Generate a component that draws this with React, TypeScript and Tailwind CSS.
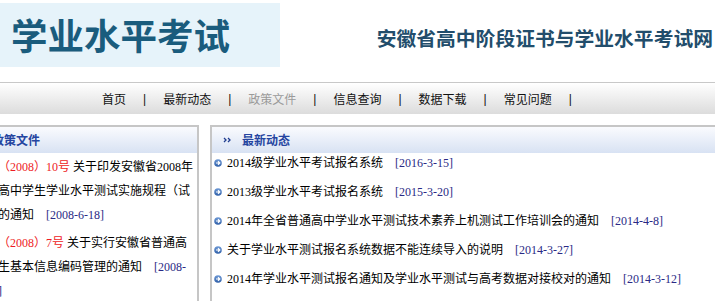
import React from 'react';

const body = '"Liberation Serif", "Noto Sans CJK SC", serif';
const cjk = '"Noto Sans CJK SC", "Noto Sans", sans-serif';

// small blue round bullet with a white arrow
const Bullet = () => (
  <svg width="8" height="8" viewBox="0 0 8 8" className="shrink-0">
    <defs>
      <linearGradient id="bl" x1="0" y1="0" x2="0" y2="1">
        <stop offset="0" stopColor="#6f9ad6" />
        <stop offset="1" stopColor="#2f5fa8" />
      </linearGradient>
    </defs>
    <circle cx="4" cy="4" r="3.8" fill="url(#bl)" />
    <path d="M2 4h3.6M4 2.3L5.8 4 4 5.7" stroke="#fff" strokeWidth="1.2" fill="none" />
  </svg>
);

// double chevron before panel titles
const Chevrons = () => (
  <svg width="9" height="6" viewBox="0 0 9 6" className="shrink-0">
    <path d="M1 1l2 2-2 2M5 1l2 2-2 2" stroke="#1f3c8f" strokeWidth="1.3" fill="none" />
  </svg>
);

const navItems = ['首页', '最新动态', '政策文件', '信息查询', '数据下载', '常见问题'];

const news = [
  { title: '2014级学业水平考试报名系统', date: '2016-3-15' },
  { title: '2013级学业水平考试报名系统', date: '2015-3-20' },
  { title: '2014年全省普通高中学业水平测试技术素养上机测试工作培训会的通知', date: '2014-4-8' },
  { title: '关于学业水平测试报名系统数据不能连续导入的说明', date: '2014-3-27' },
  { title: '2014年学业水平测试报名通知及学业水平测试与高考数据对接校对的通知', date: '2014-3-12' },
];

const PanelHead = ({ title }: { title: string }) => (
  <div className="flex h-[26px] items-center bg-gradient-to-b from-[#fafbfe] to-[#d8e2f3] pl-[11px]">
    <Chevrons />
    <span className="ml-[10px] text-[12px] font-bold text-[#2545a0]" style={{ fontFamily: cjk }}>
      {title}
    </span>
  </div>
);

export default function App() {
  return (
    <div className="h-[301px] w-[715px] overflow-hidden bg-white text-black" style={{ fontFamily: body }}>
      {/* header */}
      <div className="flex h-[82px] items-start">
        <div
          className="mt-[3px] flex h-[64px] w-[280px] shrink-0 items-center bg-[#e6f3fa] pl-[11px] text-[36.5px] font-bold text-[#1a5c7d]"
          style={{ fontFamily: cjk }}
        >
          学业水平考试
        </div>
        <div
          className="ml-auto whitespace-nowrap pr-[2px] pt-[23px] text-[19.8px] font-bold text-[#224d6b]"
          style={{ fontFamily: cjk }}
        >
          安徽省高中阶段证书与学业水平考试网
        </div>
      </div>

      {/* nav */}
      <div
        className="flex h-[32px] items-center border-t border-[#c8c8c8] bg-gradient-to-b from-white to-[#dcdcdc] pl-[102px] text-[12px]"
        style={{ fontFamily: cjk }}
      >
        {navItems.map((n) => (
          <React.Fragment key={n}>
            <span className={n === '政策文件' ? 'text-[#9a9a9a]' : 'text-[#111]'}>{n}</span>
            <span className="mx-[17px] text-[#111]" style={{ fontFamily: '"Liberation Sans", sans-serif' }}>
              |
            </span>
          </React.Fragment>
        ))}
      </div>

      {/* panels */}
      <div className="-ml-[40px] mt-[11px] flex items-start gap-[11px]">
        <div className="h-[180px] w-[239px] shrink-0 border-x-2 border-t-2 border-[#c6c6c6]">
          <PanelHead title="政策文件" />
          <div className="whitespace-nowrap pl-[36px] pt-[2px] text-[12px] leading-[24px]">
            <div>
              <span className="text-[#ee1c25]">（2008）10号</span> 关于印发安徽省2008年
              <br />
              高中学生学业水平测试实施规程（试
              <br />
              的通知 <span className="ml-[9px] text-[#2a2a85]">[2008-6-18]</span>
            </div>
            <div className="mt-[4px]">
              <span className="text-[#ee1c25]">（2008）7号</span> 关于实行安徽省普通高
              <br />
              生基本信息编码管理的通知 <span className="ml-[9px] text-[#2a2a85]">[2008-</span>
              <br />
              <span className="text-[#2a2a85]">]</span>
            </div>
          </div>
        </div>

        <div className="h-[180px] min-w-0 flex-1 border-l-2 border-t-2 border-[#c6c6c6]">
          <PanelHead title="最新动态" />
          <div className="flex flex-col gap-[9px] whitespace-nowrap pl-[2px] text-[12px]">
            {news.map((it) => (
              <div key={it.title} className="flex h-[20px] items-center">
                <Bullet />
                <span className="ml-[5px]">{it.title}</span>
                <span className="ml-[12px] text-[#2a2a85]">[{it.date}]</span>
              </div>
            ))}
          </div>
        </div>
      </div>
    </div>
  );
}
